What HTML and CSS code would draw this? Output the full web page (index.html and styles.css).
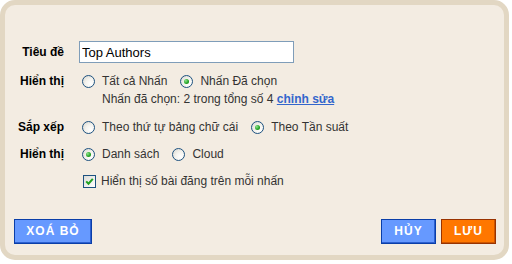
FILE: index.html
```html
<!DOCTYPE html>
<html lang="vi">
<head>
<meta charset="utf-8">
<title>Nhãn</title>
<link rel="stylesheet" href="styles.css">
</head>
<body>
<div class="frame">
  <div class="form">
    <div class="lbl lbl-mid">Tiêu đề</div>
    <div class="field"><input class="text" type="text" value="Top Authors"></div>

    <div class="lbl">Hiển thị</div>
    <div class="field">
      <div class="opts">
        <label class="opt"><span class="radio"></span>Tất cả Nhấn</label>
        <label class="opt"><span class="radio on"></span>Nhấn Đã chọn</label>
      </div>
      <div class="note">Nhấn đã chọn: 2 trong tổng số 4 <a class="link" href="#">chỉnh sửa</a></div>
    </div>

    <div class="lbl">Sắp xếp</div>
    <div class="field">
      <div class="opts">
        <label class="opt"><span class="radio"></span>Theo thứ tự bảng chữ cái</label>
        <label class="opt"><span class="radio on"></span>Theo Tần suất</label>
      </div>
    </div>

    <div class="lbl">Hiển thị</div>
    <div class="field">
      <div class="opts">
        <label class="opt"><span class="radio on"></span>Danh sách</label>
        <label class="opt"><span class="radio"></span>Cloud</label>
      </div>
    </div>

    <div class="lbl"></div>
    <div class="field">
      <label class="opt"><span class="check"><svg viewBox="0 0 9 9" width="9" height="9"><path d="M1.2 4.4 L3.5 6.7 L7.8 1.8" fill="none" stroke="#21a121" stroke-width="2"/></svg></span>Hiển thị số bài đăng trên mỗi nhấn</label>
    </div>
  </div>

  <div class="actions">
    <button class="btn blue btn-clear" type="button">XOÁ BỎ</button>
    <span class="spacer"></span>
    <button class="btn blue btn-small" type="button">HỦY</button>
    <button class="btn orange btn-small" type="button">LƯU</button>
  </div>
</div>
</body>
</html>
```
FILE: styles.css
```css
html, body {
  margin: 0;
  padding: 0;
  background: #ffffff;
}

body {
  font-family: "Liberation Sans", Arial, sans-serif;
  font-size: 12px;
  color: #333333;
}

.frame {
  box-sizing: border-box;
  width: 509px;
  height: 260px;
  border: 5px solid #e2d7c3;
  border-radius: 15px;
  background: #f3ece2;
}

.form {
  display: grid;
  grid-template-columns: 59px 1fr;
  column-gap: 15px;
  row-gap: 9px;
  padding-top: 36px;
  line-height: 18px;
}

.lbl {
  text-align: right;
  font-weight: bold;
  color: #000000;
  line-height: 18px;
}

.lbl-mid {
  align-self: center;
}

.field {
  min-width: 0;
}

.text {
  box-sizing: border-box;
  display: block;
  width: 215px;
  height: 22px;
  margin: 0;
  padding: 0 2px;
  border: 1px solid #7f9db9;
  background: #ffffff;
  font-family: "Liberation Sans", Arial, sans-serif;
  font-size: 13px;
  color: #000000;
}

.opts {
  display: flex;
  align-items: center;
  height: 18px;
}

.opt {
  display: inline-flex;
  align-items: center;
  margin-right: 10px;
  white-space: nowrap;
}

.radio {
  box-sizing: border-box;
  width: 13px;
  height: 13px;
  margin: 0 7px 0 3px;
  border: 1px solid #1c5180;
  border-radius: 50%;
  background: radial-gradient(circle at 70% 70%, #ffffff 0%, #f4f3ee 45%, #d5d4cc 100%);
  display: inline-flex;
  align-items: center;
  justify-content: center;
  flex: none;
}

.radio.on::after {
  content: "";
  width: 5px;
  height: 5px;
  border-radius: 50%;
  background: radial-gradient(circle at 35% 35%, #8fe38f 0%, #21a121 60%, #1a7a1a 100%);
}

.check {
  box-sizing: border-box;
  width: 13px;
  height: 13px;
  margin: 0 5px 0 4px;
  border: 1px solid #1c5180;
  background: linear-gradient(135deg, #dcdcd7 0%, #ffffff 100%);
  display: inline-flex;
  align-items: center;
  justify-content: center;
  flex: none;
}

.note {
  padding-left: 23px;
  line-height: 19px;
}

.link {
  color: #3366cc;
  font-weight: bold;
  text-decoration: underline;
}

.actions {
  display: flex;
  gap: 5px;
  margin-top: 28px;
  padding: 0 8px 0 9px;
}

.spacer {
  flex: 1;
}

.btn {
  box-sizing: border-box;
  height: 25px;
  margin: 0;
  padding: 0;
  font-family: "Liberation Sans", Arial, sans-serif;
  font-weight: bold;
  font-size: 12px;
  letter-spacing: 1px;
  color: #ffffff;
  cursor: pointer;
}

.btn.blue {
  background: #6699ff;
  border: 1px solid #0a3ea8;
  box-shadow: inset -1px -1px 0 #2b5fd0;
}

.btn.orange {
  background: #ff7700;
  border: 1px solid #993300;
  box-shadow: inset -1px -1px 0 #cc5500;
}

.btn-clear {
  width: 78px;
}

.btn-small {
  width: 55px;
}
```
